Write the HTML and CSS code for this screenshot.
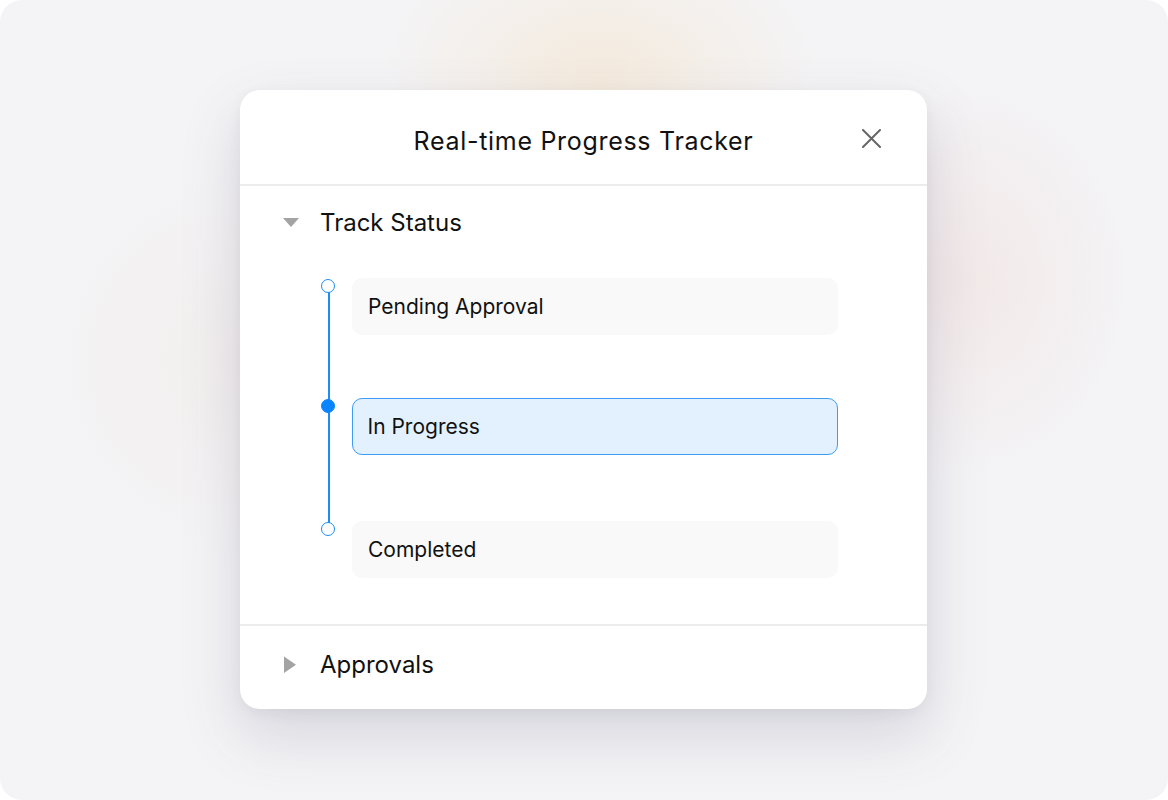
FILE: index.html
```html
<!DOCTYPE html>
<html lang="en">
<head>
  <meta charset="UTF-8" />
  <meta name="viewport" content="width=device-width, initial-scale=1.0" />
  <title>Real-time Progress Tracker</title>
  <link rel="stylesheet" href="styles.css">
</head>
<body>
  <div class="stage">
    <div class="card">
      <header class="card-head">
        <h1>Real-time Progress Tracker</h1>
        <button class="close" aria-label="Close">
          <svg width="19" height="19" viewBox="0 0 19 19">
            <path d="M1 1 L18 18 M18 1 L1 18" stroke="#666" stroke-width="2" stroke-linecap="round" fill="none"/>
          </svg>
        </button>
      </header>

      <section class="section open">
        <div class="section-head">
          <span class="caret">
            <svg width="16" height="10" viewBox="0 0 16 10"><polygon points="0,0 16,0 8,9" fill="#a3a3a3"/></svg>
          </span>
          <span class="section-title">Track Status</span>
        </div>
        <div class="timeline">
          <div class="line"></div>
          <div class="step">
            <span class="dot"></span>
            <div class="step-box">Pending Approval</div>
          </div>
          <div class="step current">
            <span class="dot"></span>
            <div class="step-box">In Progress</div>
          </div>
          <div class="step">
            <span class="dot"></span>
            <div class="step-box">Completed</div>
          </div>
        </div>
      </section>

      <section class="section">
        <div class="section-head">
          <span class="caret">
            <svg width="16" height="18" viewBox="0 0 16 18"><polygon points="1,0.5 13,8.75 1,17" fill="#a3a3a3"/></svg>
          </span>
          <span class="section-title">Approvals</span>
        </div>
      </section>
    </div>
  </div>
</body>
</html>
```

FILE: styles.css
```css
body {
  margin: 0;
  padding: 0;
  background: #fff;
  font-family: Inter, "Noto Sans", Arial, sans-serif;
  color: #111;
}
.stage {
  height: 800px;
  box-sizing: border-box;
  padding: 90px 241px 0 240px;
  border-radius: 22px;
  background:
    radial-gradient(ellipse 320px 220px at 600px 80px, rgba(245, 226, 200, 0.55), transparent 70%),
    radial-gradient(ellipse 260px 300px at 960px 280px, rgba(240, 218, 215, 0.45), transparent 70%),
    radial-gradient(ellipse 300px 300px at 240px 360px, rgba(240, 228, 222, 0.35), transparent 70%),
    #f4f4f6;
}
.card {
  background: #fff;
  border-radius: 20px;
  box-shadow: 0 26px 60px rgba(80, 70, 110, 0.18), 0 4px 14px rgba(0, 0, 0, 0.05);
  overflow: hidden;
}
.card-head {
  height: 96px;
  box-sizing: border-box;
  position: relative;
  display: flex;
  align-items: center;
  justify-content: center;
  border-bottom: 2px solid #ececec;
}
.card-head h1 {
  margin: 0;
  font-size: 25px;
  font-weight: 400;
  letter-spacing: 0.7px;
  padding-top: 8px;
}
.close {
  position: absolute;
  right: 46px;
  top: 39px;
  background: none;
  border: none;
  padding: 0;
  width: 19px;
  height: 19px;
  cursor: pointer;
}
.close svg {
  display: block;
}
.section + .section {
  border-top: 2px solid #ececec;
}
.section-head {
  display: flex;
  align-items: center;
  gap: 21px;
  padding: 23px 43px 20px;
  height: 27px;
}
.caret {
  width: 16px;
  display: flex;
  justify-content: center;
}
.caret svg {
  display: block;
}
.section-title {
  font-size: 24px;
  line-height: 27px;
}
.section:last-child .section-head {
  padding: 25px 43px 31px;
}
.timeline {
  position: relative;
  margin: 22px 0 0 81px;
  padding-bottom: 46px;
  display: flex;
  flex-direction: column;
  gap: 63px;
}
.line {
  position: absolute;
  left: 7px;
  top: 8px;
  bottom: 96px;
  width: 1.5px;
  background: #1e8cf5;
}
.step {
  display: flex;
  align-items: flex-start;
  gap: 17px;
}
.step:last-child {
  margin-top: 3px;
}
.dot {
  position: relative;
  width: 12px;
  height: 12px;
  margin-top: 1px;
  border-radius: 50%;
  border: 1.5px solid #1e8cf5;
  background: #fff;
  flex: none;
}
.step.current .dot {
  background: #0a84ff;
  border-color: #0a84ff;
}
.step-box {
  width: 486px;
  height: 57px;
  box-sizing: border-box;
  padding: 0 16px;
  display: flex;
  align-items: center;
  background: #f9f9f9;
  border-radius: 10px;
  font-size: 21px;
}
.step.current .step-box {
  background: #e3f1fe;
  border: 1.5px solid #3d9cf5;
  padding: 0 14.5px;
}
```
